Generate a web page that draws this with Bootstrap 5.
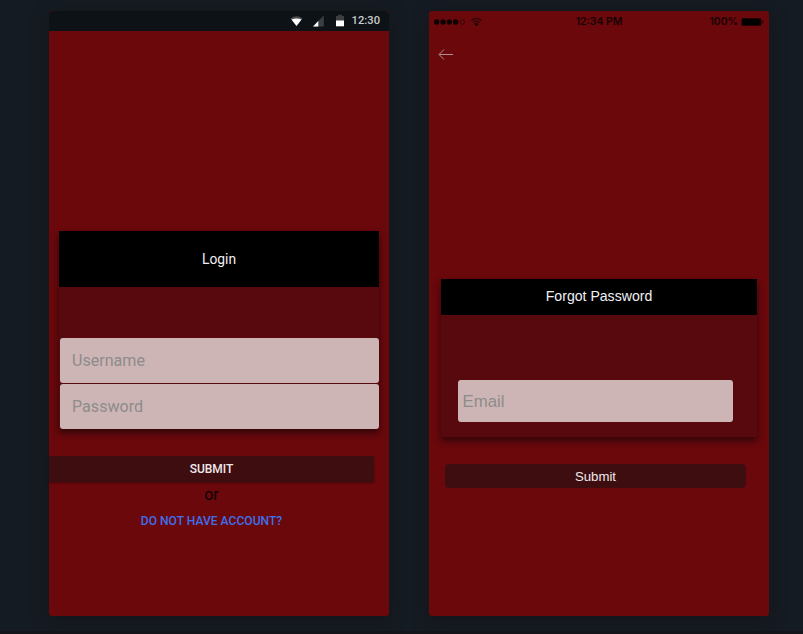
<!DOCTYPE html>
<html lang="en">
<head>
<meta charset="utf-8">
<meta name="viewport" content="width=device-width, initial-scale=1">
<title>Login</title>
<link href="https://cdn.jsdelivr.net/npm/bootstrap@5.3.0/dist/css/bootstrap.min.css" rel="stylesheet">
<style>
  body { background: #151b22; height: 634px; overflow: hidden; border-bottom: 3px solid #14151b; }
  .screens { padding: 11px 34px 0 49px; gap: 40px; }
  .phone { width: 340px; height: 605px; background: #6a080c; border-radius: 3px; box-shadow: 0 4px 16px rgba(20,20,24,.7); flex: none; }
  .android { font-family: Roboto, sans-serif; }
  .ios { font-family: "Liberation Sans", Arial, sans-serif; }
  .android-status { height: 20px; background: #0d1216; color: #c8cacc; font-size: 11.2px; font-weight: 500; line-height: 20px; padding-right: 9px; }
  .status-icons { margin-right: 6px; }
  .ios-status { height: 21px; padding: 0 5px; font-family: Inter, sans-serif; font-size: 10.4px; font-weight: 600; line-height: 21px; color: #160102; }
  .battery { margin-left: 3px; }
  .panel { --bs-card-bg: #57090e; --bs-card-border-width: 0; --bs-card-border-radius: 1px; --bs-card-inner-border-radius: 1px; box-shadow: 0 4px 7px rgba(30,5,8,.75); }
  .panel-title { background: #000; color: #f0f0f5; font-size: 14px; }
  .login-panel { width: 320px; height: 198px; margin: 200px 0 0 10px; }
  .login-panel .panel-title { height: 56px; font-size: 13.8px; }
  .fields { margin: 51px 0 0 1px; gap: 1px; }
  .field { height: 45px; padding: 0 12px; background: #cdb5b5; border: 0; border-radius: 3px; font-size: 16.100px; color: #333; }
  .field:focus { background: #cdb5b5; }
  .field::placeholder { color: #8e8b8b; opacity: 1; }
  .forgot-panel { width: 316px; height: 158px; margin: 217px 0 0 12px; }
  .forgot-panel .panel-title { height: 36px; font-size: 14.100px; }
  .email { width: 275px; height: 42px; padding: 2px 5px 0 4.500px; margin: 65px 0 0 17px; font-size: 16.800px; }
  .submit { background: #3d0d10; color: #f0e9ea; border: 0; padding: 0; }
  .submit:hover { background: #4a1013; color: #fff; }
  .submit-android { width: 325px; height: 26px; margin-top: 27px; border-radius: 1px; font-size: 12px; font-weight: 500; line-height: 26px; box-shadow: 0 1px 2px rgba(30,5,8,.5); }
  .submit-ios { width: 301px; height: 24px; margin: 27px 0 0 16px; padding-top: 1px; border-radius: 4px; font-size: 13.200px; line-height: 24px; }
  .below { width: 325px; }
  .divider-word { height: 26px; font-size: 16px; line-height: 26px; color: #0c0001; }
  .signup { height: 26px; font-size: 12.100px; font-weight: 500; line-height: 26px; color: #3c70ee; }
  .back { margin: 16px 0 0 9px; width: 16px; height: 14px; }
  svg { display: block; flex: none; }
</style>
<script src="https://cdn.jsdelivr.net/npm/bootstrap@5.3.0/dist/js/bootstrap.bundle.min.js"></script>
</head>
<body>
<main class="screens d-flex">
  <section class="phone android d-flex flex-column">
    <div class="android-status rounded-top-1 d-flex align-items-center justify-content-end">
      <svg width="56" height="14" viewBox="0 0 56 14" class="status-icons">
        <path d="M.4 4.4Q6.500 .2 12.600 4.400L6.500 12z" fill="#4b4e51"/>
        <path d="M1.500 5.600Q6.500 3.200 11.500 5.600L6.500 12z" fill="#fff"/>
        <path d="M23 12.400L33.800 1.500V12.400z" fill="#3b3f42"/>
        <path d="M23 12.400L28.300 7.100V12.400z" fill="#fff"/>
        <path d="M46 2h2V.8h4V2h2v6h-8z" fill="#3b3f42"/>
        <path d="M46 6.500h8V12.300h-8z" fill="#fff"/>
      </svg>
      <span>12:30</span>
    </div>
    <div class="card panel login-panel">
      <div class="panel-title d-flex align-items-center justify-content-center">Login</div>
      <div class="fields d-flex flex-column">
        <input class="form-control field" type="text" placeholder="Username" aria-label="Username">
        <input class="form-control field" type="password" placeholder="Password" aria-label="Password">
      </div>
    </div>
    <button type="button" class="btn submit submit-android text-uppercase">Submit</button>
    <div class="below d-flex flex-column text-center">
      <span class="divider-word">or</span>
      <a href="#" class="signup text-uppercase text-decoration-none">Do not have account?</a>
    </div>
  </section>

  <section class="phone ios d-flex flex-column">
    <div class="ios-status d-flex align-items-center">
      <div class="col">
        <svg width="50" height="12" viewBox="0 0 50 12">
          <g fill="#100001"><circle cx="2.700" cy="6" r="2.700"/><circle cx="9" cy="6" r="2.700"/><circle cx="15.300" cy="6" r="2.700"/><circle cx="21.600" cy="6" r="2.700"/></g>
          <circle cx="28.300" cy="6" r="2.300" fill="none" stroke="#2c0305" stroke-width=".7"/>
          <g fill="none" stroke="#2c0305" stroke-width="1.300"><path d="M37.500 4.400q4.900-4.200 9.800 0M39.200 6.400q3.200-2.600 6.400 0"/></g>
          <path d="M40.200 7.900q2.200-1.700 4.400 0l-2.200 2.200z" fill="#100001"/>
        </svg>
      </div>
      <div class="col-auto">12:34 PM</div>
      <div class="col d-flex align-items-center justify-content-end">
        <span>100%</span>
        <svg width="23" height="10" viewBox="0 0 23 10" class="battery">
          <rect x=".4" y=".9" width="20" height="8.200" rx="1.500" fill="#250204"/>
          <rect x="1.400" y="1.900" width="18" height="6.200" rx=".7" fill="#000"/>
          <path d="M21.200 3.400q1.400.4 1.400 1.600t-1.400 1.600z" fill="#250204"/>
        </svg>
      </div>
    </div>
    <a href="#" class="back" aria-label="Back">
      <svg width="16" height="14" viewBox="0 0 16 14"><path d="M15 6.500H1.500M6 1.500L1 6.500l5 5" fill="none" stroke="#b09092" stroke-width="1"/></svg>
    </a>
    <div class="card panel forgot-panel">
      <div class="panel-title d-flex align-items-center justify-content-center">Forgot Password</div>
      <input class="form-control field email" type="email" placeholder="Email" aria-label="Email">
    </div>
    <button type="button" class="btn submit submit-ios">Submit</button>
  </section>
</main>
</body>
</html>
